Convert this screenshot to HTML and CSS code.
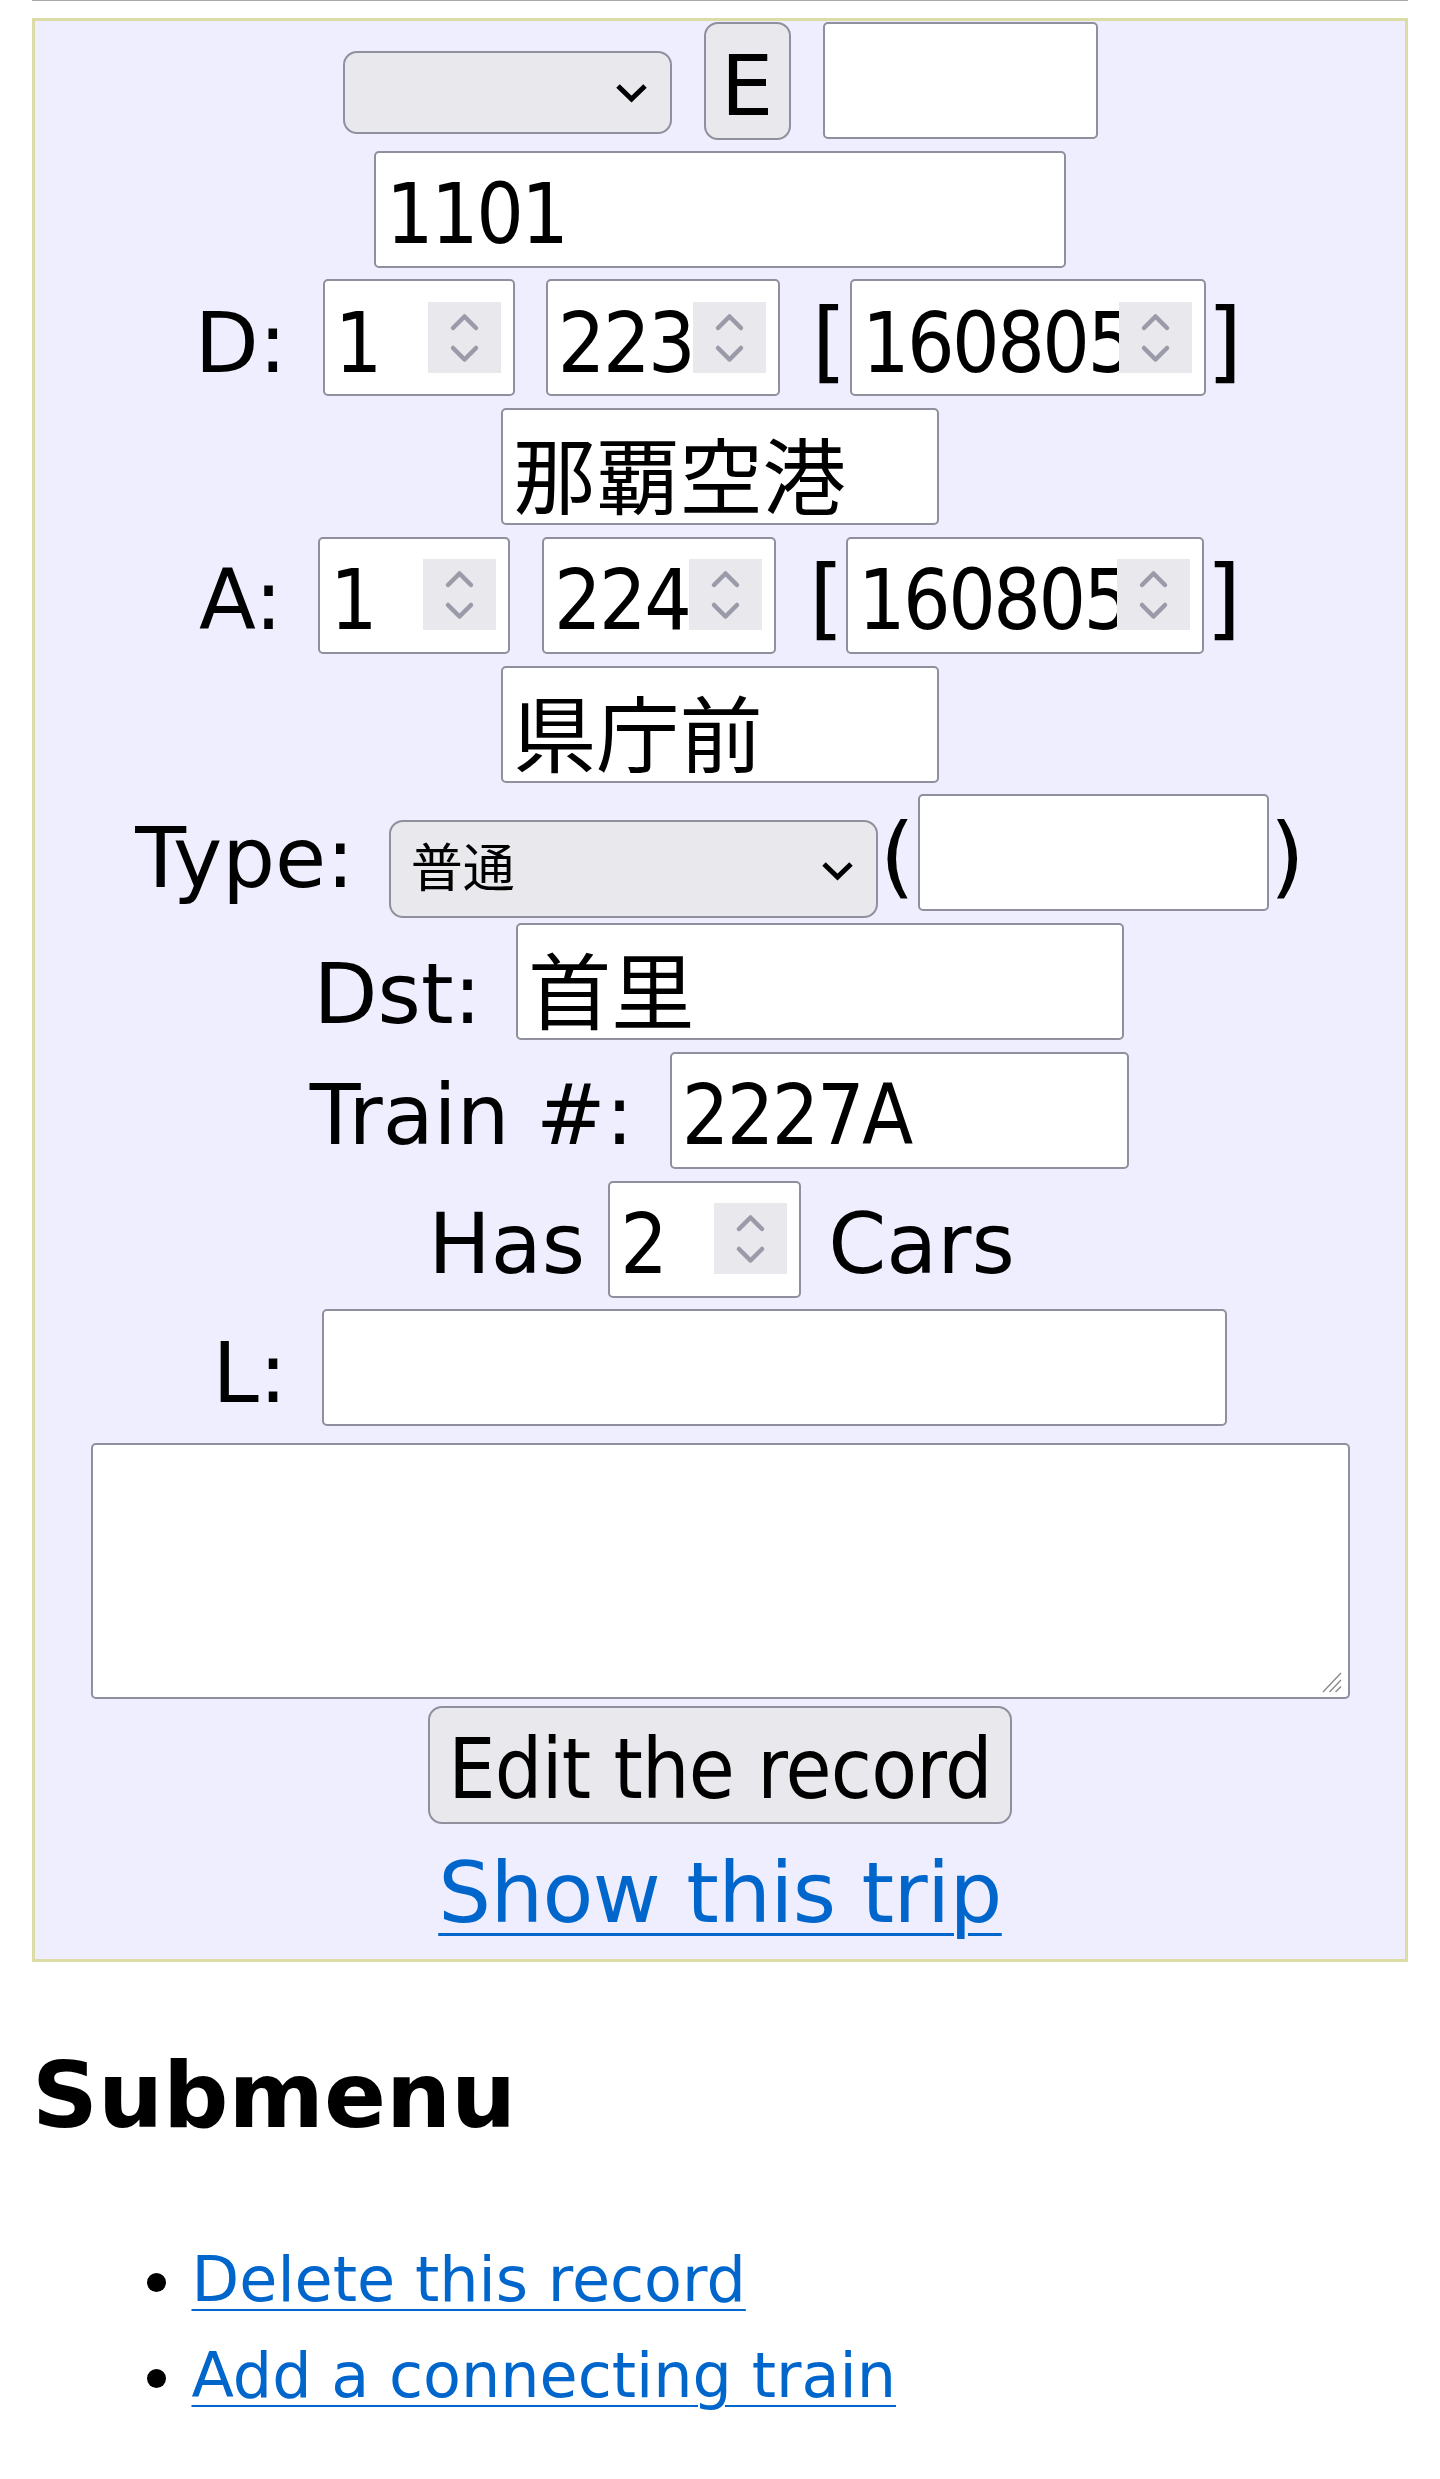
FILE: index.html
```html
<!DOCTYPE html>
<html lang="ja">
<head>
<meta charset="utf-8">
<title>Edit record</title>
<link rel="stylesheet" href="styles.css">
</head>
<body>
<div class="topline"></div>
<form class="record" action="#">
  <div class="row r1">
    <span class="selwrap sel-top"><select class="sel w329"><option></option></select><svg class="chev chev-a" viewBox="0 0 33 21"><polyline points="3,3 16.5,16 30,3"/></svg></span>
    <button type="button" class="btn-e ml32 mt1">E</button>
    <input type="text" class="field w275 ml32 mt1">
  </div>
  <div class="row">
    <input type="text" class="field tight w692" value="1101">
  </div>
  <div class="row">
    <span class="lbl">D:</span>
    <span class="num ml36"><input type="number" class="field tight w192" value="1"><span class="spin"><svg viewBox="0 0 73 71"><polyline points="25,26 36.5,14.5 48,26"/><polyline points="25,46 36.5,57.5 48,46"/></svg></span></span>
    <span class="num ml31"><input type="number" class="field tight w234" value="223"><span class="spin"><svg viewBox="0 0 73 71"><polyline points="25,26 36.5,14.5 48,26"/><polyline points="25,46 36.5,57.5 48,46"/></svg></span></span>
    <span class="lbl big ml32">[</span>
    <span class="num ml3"><input type="number" class="field tight w356" value="160805"><span class="spin"><svg viewBox="0 0 73 71"><polyline points="25,26 36.5,14.5 48,26"/><polyline points="25,46 36.5,57.5 48,46"/></svg></span></span>
    <span class="lbl big ml1 mr3">]</span>
  </div>
  <div class="row">
    <input type="text" class="field w438" value="那覇空港">
  </div>
  <div class="row">
    <span class="lbl">A:</span>
    <span class="num ml35"><input type="number" class="field tight w192" value="1"><span class="spin"><svg viewBox="0 0 73 71"><polyline points="25,26 36.5,14.5 48,26"/><polyline points="25,46 36.5,57.5 48,46"/></svg></span></span>
    <span class="num ml32"><input type="number" class="field tight w234" value="224"><span class="spin"><svg viewBox="0 0 73 71"><polyline points="25,26 36.5,14.5 48,26"/><polyline points="25,46 36.5,57.5 48,46"/></svg></span></span>
    <span class="lbl big ml33">[</span>
    <span class="num ml2"><input type="number" class="field tight w358" value="160805"><span class="spin"><svg viewBox="0 0 73 71"><polyline points="25,26 36.5,14.5 48,26"/><polyline points="25,46 36.5,57.5 48,46"/></svg></span></span>
    <span class="lbl big ml2">]</span>
  </div>
  <div class="row">
    <input type="text" class="field w438" value="県庁前">
  </div>
  <div class="row">
    <span class="lbl">Type:</span>
    <span class="selwrap ml34"><select class="sel sel-type w489"><option>普通</option></select><svg class="chev chev-b" viewBox="0 0 33 21"><polyline points="3,3 16.5,16 30,3"/></svg></span>
    <span class="lbl big ml2">(</span>
    <input type="text" class="field w351 ml3">
    <span class="lbl big ml1">)</span>
  </div>
  <div class="row">
    <span class="lbl">Dst:</span>
    <input type="text" class="field w608 ml34 mr2" value="首里">
  </div>
  <div class="row">
    <span class="lbl">Train #:</span>
    <input type="text" class="field tight w459 ml36 mr1" value="2227A">
  </div>
  <div class="row">
    <span class="lbl ml3">Has</span>
    <span class="num ml23"><input type="number" class="field tight w193" value="2"><span class="spin"><svg viewBox="0 0 73 71"><polyline points="25,26 36.5,14.5 48,26"/><polyline points="25,46 36.5,57.5 48,46"/></svg></span></span>
    <span class="lbl ml27">Cars</span>
  </div>
  <div class="row">
    <span class="lbl">L:</span>
    <input type="text" class="field w905 ml35">
  </div>
  <div class="ta-row">
    <span class="tawrap"><textarea class="ta"></textarea><svg class="grip" viewBox="0 0 20 21"><line x1="19" y1="1" x2="1" y2="20"/><line x1="19" y1="8" x2="7.5" y2="20"/><line x1="19" y1="14.5" x2="13.5" y2="20"/></svg></span>
  </div>
  <div class="btn-row">
    <button type="button" class="btn-submit">Edit the record</button>
  </div>
  <div class="link-row"><a href="#" class="show-link">Show this trip</a></div>
</form>

<h2 class="submenu-title">Submenu</h2>
<ul class="submenu">
  <li><a href="#">Delete this record</a></li>
  <li><a href="#">Add a connecting train</a></li>
</ul>
</body>
</html>
```

FILE: styles.css
```css
html {
  margin: 0;
}

body {
  margin: 0;
  padding: 0 32px;
  font-family: "DejaVu Sans", "Noto Sans CJK JP", sans-serif;
  font-size: 62.4px;
  color: #000;
  background: #fff;
}

.topline {
  border-top: 1px solid #a9a9a9;
}

.record {
  display: block;
  margin: 17px 0 0;
  border: 3px solid #dcdca6;
  background: #eeeefe;
  font-size: 83.2px;
  padding: 0 0 1px;
}

.row {
  display: flex;
  justify-content: center;
  align-items: baseline;
  height: 128.75px;
}

.r1 {
  align-items: flex-start;
  height: 129.5px;
}

.lbl {
  line-height: 128.75px;
  white-space: pre;
}

.lbl.big {
  font-size: 1.08em;
  line-height: 120px;
}

/* text + number fields */
.field {
  box-sizing: border-box;
  height: 117px;
  margin: 0;
  padding: 13.4px 9px 2.8px 10px;
  border: 2px solid #8f8f9d;
  border-radius: 5px;
  background: #fff;
  color: #000;
  font-family: "DejaVu Sans Condensed", "DejaVu Sans", "Noto Sans CJK JP", sans-serif;
  font-size: 83.2px;
  line-height: 96.8px;
  outline: none;
}

.tight {
  letter-spacing: -2.5px;
}

.num {
  position: relative;
  display: flex;
}

.num .field {
  padding-right: 85px;
  -moz-appearance: textfield;
  appearance: textfield;
}

.num .field::-webkit-inner-spin-button,
.num .field::-webkit-outer-spin-button {
  -webkit-appearance: none;
  margin: 0;
}

.spin {
  position: absolute;
  right: 14px;
  top: 22.7px;
  width: 73px;
  height: 71px;
  background: #e9e9ed;
  pointer-events: none;
}

.spin svg {
  display: block;
  width: 73px;
  height: 71px;
}

.spin polyline {
  fill: none;
  stroke: #9b9aa9;
  stroke-width: 4.5;
  stroke-linecap: round;
  stroke-linejoin: round;
}

/* selects */
.selwrap {
  position: relative;
  display: flex;
}

.sel-top {
  margin-top: 29.7px;
}

.sel {
  -webkit-appearance: none;
  appearance: none;
  box-sizing: border-box;
  margin: 0;
  padding: 9.25px 60px 9.25px 20px;
  border: 2px solid #8f8f9d;
  border-radius: 14px;
  background: #e9e9ed;
  color: #000;
  font-family: "DejaVu Sans Condensed", "DejaVu Sans", "Noto Sans CJK JP", sans-serif;
  font-size: 52px;
  line-height: 60.5px;
  outline: none;
}

.sel-type {
  padding-top: 16.7px;
  padding-bottom: 16.7px;
}

.chev {
  position: absolute;
  right: 24px;
  width: 33px;
  height: 21px;
  pointer-events: none;
}

.chev polyline {
  fill: none;
  stroke: #000;
  stroke-width: 5;
}

.chev-a {
  top: 32px;
}

.chev-b {
  top: 41.5px;
}

/* buttons */
.btn-e {
  box-sizing: border-box;
  width: 87px;
  height: 118px;
  margin: 0;
  padding: 15.8px 0 1.4px;
  border: 2px solid #8f8f9d;
  border-radius: 14px;
  background: #e9e9ed;
  color: #000;
  font-family: "DejaVu Sans", sans-serif;
  font-size: 83.2px;
  line-height: 96.8px;
}

.btn-submit {
  box-sizing: border-box;
  width: 584px;
  height: 118px;
  margin: 0;
  padding: 14.1px 0 3.1px;
  border: 2px solid #8f8f9d;
  border-radius: 14px;
  background: #e9e9ed;
  color: #000;
  font-family: "DejaVu Sans Condensed", "DejaVu Sans", sans-serif;
  font-size: 83.2px;
  line-height: 96.8px;
  letter-spacing: -0.7px;
  white-space: nowrap;
}

/* textarea */
.ta-row {
  display: flex;
  justify-content: center;
  padding-top: 4.7px;
}

.tawrap {
  position: relative;
  display: block;
}

.ta {
  display: block;
  box-sizing: border-box;
  width: 1259px;
  height: 256.6px;
  margin: 0;
  border: 2px solid #8f8f9d;
  border-radius: 5px;
  background: #fff;
  resize: none;
  outline: none;
}

.grip {
  position: absolute;
  right: 8px;
  bottom: 6.6px;
  width: 20px;
  height: 21px;
}

.grip line {
  stroke: #8a8a8a;
  stroke-width: 1.4;
}

.btn-row {
  display: flex;
  justify-content: center;
  padding-top: 6.7px;
}

.link-row {
  text-align: center;
  line-height: 128.75px;
  margin-top: 5.55px;
}

.show-link {
  letter-spacing: -0.6px;
}

a {
  color: #0066cc;
  text-decoration-thickness: 0.04em;
  text-underline-offset: 0.135em;
}

/* widths */
.w192 { width: 192px; }
.w193 { width: 193px; }
.w234 { width: 234px; }
.w275 { width: 275px; }
.w329 { width: 329px; }
.w351 { width: 351px; }
.w356 { width: 356px; }
.w358 { width: 358px; }
.w438 { width: 438px; }
.w459 { width: 459px; }
.w489 { width: 489px; }
.w608 { width: 608px; }
.w692 { width: 692px; }
.w905 { width: 905px; }

/* spacing */
.ml1 { margin-left: 1px; }
.ml2 { margin-left: 2px; }
.ml3 { margin-left: 3px; }
.ml23 { margin-left: 23px; }
.ml27 { margin-left: 27px; }
.ml31 { margin-left: 31px; }
.ml32 { margin-left: 32px; }
.ml33 { margin-left: 33px; }
.ml34 { margin-left: 34.5px; }
.ml35 { margin-left: 35.5px; }
.ml36 { margin-left: 36px; }
.mr1 { margin-right: 1.5px; }
.mr2 { margin-right: 2.4px; }
.mr3 { margin-right: 3.3px; }
.mt1 { margin-top: 0.7px; }

/* submenu */
.submenu-title {
  margin: 79.6px 0 0;
  font-size: 91.5px;
  font-weight: bold;
  line-height: normal;
}

.submenu {
  margin: 83.1px 0 0;
  padding-left: 159.5px;
  font-size: 62px;
  line-height: 95.7px;
}
```
